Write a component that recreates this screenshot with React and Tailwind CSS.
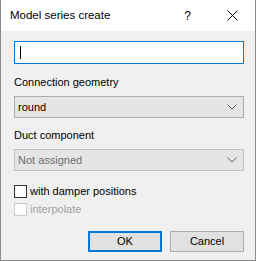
import React from 'react';

const font = { fontFamily: '"Liberation Sans", Arial, sans-serif' };

const Chevron = ({ color = '#606060' }) => (
  <svg width="10" height="6" viewBox="0 0 10 6" className="mr-[6px]">
    <path d="M0.5 0.5 L5 5 L9.5 0.5" fill="none" stroke={color} strokeWidth="1" />
  </svg>
);

const Combo = ({ value, disabled }) => (
  <div
    className={`ml-[13px] mr-[11px] h-[22px] flex items-center justify-between border bg-[#e5e5e5] ${
      disabled ? 'border-[#bfbfbf] text-[#6d6d6d]' : 'border-[#adadad] text-black'
    }`}
  >
    <span className="pl-[3px] text-[11px] leading-none">{value}</span>
    <Chevron />
  </div>
);

const Check = ({ label, disabled }) => (
  <div className="flex items-center ml-[13px]">
    <div
      className={`w-[13px] h-[13px] border bg-white ${disabled ? 'border-[#cccccc]' : 'border-[#333333]'}`}
    />
    <span className={`ml-[3px] text-[11px] leading-none ${disabled ? 'text-[#a0a0a0]' : 'text-black'}`}>
      {label}
    </span>
  </div>
);

export default function App() {
  return (
    <div
      style={font}
      className="w-[256px] h-[261px] flex flex-col bg-[#f0f0f0] border-x border-b border-[#8a8a8a] overflow-hidden"
    >
      {/* title bar */}
      <div className="h-[31px] bg-white flex items-center shrink-0">
        <span className="ml-[9px] text-[11.5px] text-black">Model series create</span>
        <span className="ml-auto text-[12px] text-black mr-[36px]">?</span>
        <svg width="11" height="11" viewBox="0 0 11 11" className="mr-[17px]">
          <path d="M0.5 0.5 L10.5 10.5 M10.5 0.5 L0.5 10.5" stroke="#000" strokeWidth="1" />
        </svg>
      </div>

      <div className="flex flex-col">
        <div className="mt-[10px] ml-[13px] mr-[11px] h-[23px] border border-[#0078d7] bg-white flex items-center">
          <div className="ml-[5px] w-px h-[13px] bg-black" />
        </div>

        <div className="mt-[10px] ml-[13px] text-[11px] leading-[16px] text-black">Connection geometry</div>
        <div className="mt-[6px]">
          <Combo value="round" />
        </div>

        <div className="mt-[9px] ml-[13px] text-[11px] leading-[16px] text-black">Duct component</div>
        <div className="mt-[6px]">
          <Combo value="Not assigned" disabled />
        </div>

        <div className="mt-[14px]">
          <Check label="with damper positions" />
        </div>
        <div className="mt-[5px]">
          <Check label="interpolate" disabled />
        </div>

        <div className="mt-[15px] flex justify-end gap-[8px] mr-[11px]">
          <button className="w-[74px] h-[21px] border-2 border-[#0078d7] bg-[#e1e1e1] text-[11px] leading-none text-black">
            OK
          </button>
          <button className="w-[74px] h-[21px] border border-[#adadad] bg-[#e1e1e1] text-[11px] leading-none text-black">
            Cancel
          </button>
        </div>
      </div>
    </div>
  );
}
